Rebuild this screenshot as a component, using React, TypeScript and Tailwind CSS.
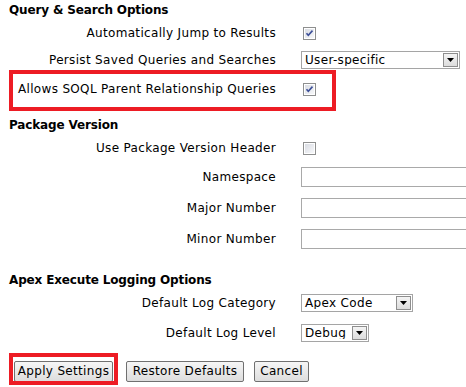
const font = { fontFamily: '"DejaVu Sans", Verdana, sans-serif' };

function Check({ checked }: { checked?: boolean }) {
    return (
        <svg width="13" height="13" viewBox="0 0 13 13" className="block">
            <defs>
                <linearGradient id={checked ? 'gc' : 'gu'} x1="0" y1="0" x2="1" y2="1">
                    <stop offset="0" stopColor="#d9dce3" />
                    <stop offset="1" stopColor="#f7f8fa" />
                </linearGradient>
            </defs>
            <rect x="0.5" y="0.5" width="12" height="12" fill="#fff" stroke="#8e8f8f" />
            <rect x="2" y="2" width="9" height="9" fill={`url(#${checked ? 'gc' : 'gu'})`} />
            {checked && (
                <path d="M3.5 6.2 L5.3 8.3 L9.5 3.6" fill="none" stroke="#3d4f98" strokeWidth="1.6" />
            )}
        </svg>
    );
}

function Select({ value, width }: { value: string; width: string }) {
    return (
        <div className={`flex h-[18px] items-center border border-[#a5a5a5] bg-white ${width}`}>
            <span className="flex-1 truncate pl-[3px] text-[12px] leading-none tracking-[0.33px] text-black">{value}</span>
            <span className="mr-[1px] flex h-[14px] w-[15px] items-center justify-center border border-[#8e8e8e] bg-gradient-to-b from-[#f4f4f4] to-[#dcdcdc]">
                <svg width="7" height="4" viewBox="0 0 7 4">
                    <path d="M0 0 H7 L3.5 4 Z" fill="#000" />
                </svg>
            </span>
        </div>
    );
}

function Row({ label, mt, children }: { label: string; mt: string; children: React.ReactNode }) {
    return (
        <div className={`flex h-[20px] items-center ${mt}`}>
            <div className="w-[276px] shrink-0 text-right text-[12px] tracking-[0.33px] text-black">{label}</div>
            <div className="ml-[25px] flex items-center">{children}</div>
        </div>
    );
}

function Heading({ text, mt }: { text: string; mt: string }) {
    return (
        <div className={`flex h-[20px] items-center pl-[9px] text-[12px] font-bold tracking-[-0.15px] text-black ${mt}`}>
            {text}
        </div>
    );
}

function Btn({ label, className = '' }: { label: string; className?: string }) {
    return (
        <button className={`h-[21px] whitespace-nowrap rounded-[2px] border border-[#707070] bg-gradient-to-b from-[#f6f6f6] to-[#dddddd] px-0 text-center text-[12px] leading-none tracking-[0.33px] text-black ${className}`}>
            {label}
        </button>
    );
}

export default function App() {
    return (
        <div className="relative h-[387px] w-[466px] overflow-hidden bg-white" style={font}>
            <Heading text="Query & Search Options" mt="mt-0" />
            <Row label="Automatically Jump to Results" mt="mt-[3px]">
                <span className="ml-[2px]"><Check checked /></span>
            </Row>
            <Row label="Persist Saved Queries and Searches" mt="mt-[7px]">
                <Select value="User-specific" width="w-[159px]" />
            </Row>
            <Row label="Allows SOQL Parent Relationship Queries" mt="mt-[9px]">
                <span className="ml-[2px]"><Check checked /></span>
            </Row>

            <Heading text="Package Version" mt="mt-[16px]" />
            <Row label="Use Package Version Header" mt="mt-[3px]">
                <span className="ml-[2px]"><Check /></span>
            </Row>
            <Row label="Namespace" mt="mt-[9px]">
                <div className="h-[20px] w-[180px] border border-[#a9a9a9] bg-white" />
            </Row>
            <Row label="Major Number" mt="mt-[11px]">
                <div className="h-[20px] w-[180px] border border-[#a9a9a9] bg-white" />
            </Row>
            <Row label="Minor Number" mt="mt-[11px]">
                <div className="h-[20px] w-[180px] border border-[#a9a9a9] bg-white" />
            </Row>

            <Heading text="Apex Execute Logging Options" mt="mt-[21px]" />
            <Row label="Default Log Category" mt="mt-[3px]">
                <Select value="Apex Code" width="w-[112px]" />
            </Row>
            <Row label="Default Log Level" mt="mt-[10px]">
                <Select value="Debug" width="w-[68px]" />
            </Row>

            <div className="mt-[17px] flex h-[22px] items-center pl-[14px]">
                <Btn label="Apply Settings" className="w-[99px]" />
                <Btn label="Restore Defaults" className="ml-[13px] w-[118px]" />
                <Btn label="Cancel" className="ml-[10px] w-[55px]" />
            </div>

            <div className="pointer-events-none absolute left-[9px] top-[70px] h-[41px] w-[327px] border-4 border-[#ed1c24]" />
            <div className="pointer-events-none absolute left-[9px] top-[353px] h-[32px] w-[109px] border-4 border-[#ed1c24]" />
        </div>
    );
}
